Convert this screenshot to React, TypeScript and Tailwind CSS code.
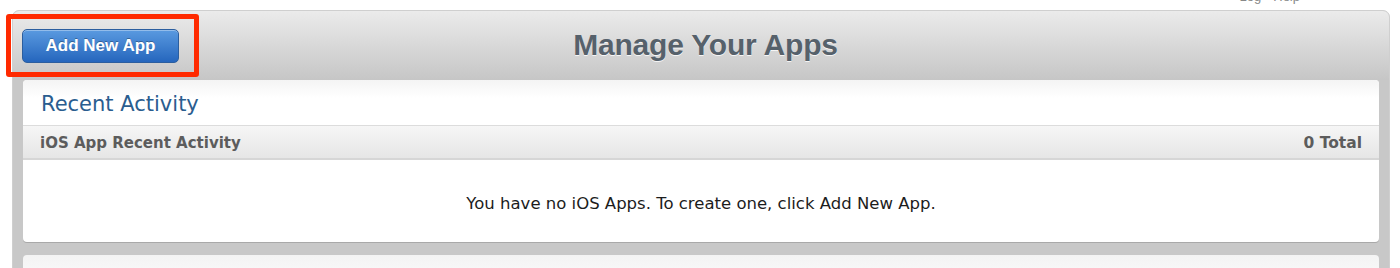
const sans = { fontFamily: '"DejaVu Sans", "Lucida Grande", sans-serif' };
const helv = { fontFamily: '"Liberation Sans", Helvetica, Arial, sans-serif' };

const App = () => {
  return (
    <div className="relative h-[268px] overflow-hidden bg-white">
      {/* top links, mostly scrolled out of view */}
      <div className="flex h-[10px] justify-end overflow-hidden pr-[100px]">
        <div className="mt-[-11px] flex gap-[12px] text-[13px] leading-[16px] text-[#888]" style={helv}>
          <span>Log</span>
          <span>Help</span>
        </div>
      </div>

      {/* main panel */}
      <div className="ml-[12px] mr-[10px] rounded-t-[7px] border border-[#cfcfcf] bg-[#c8c8c8]">
        {/* header */}
        <div className="grid h-[69px] grid-cols-[1fr_auto_1fr] items-center rounded-t-[6px] bg-gradient-to-b from-[#ebebeb] to-[#c6c6c6] pl-[9px]">
          <div>
            <button
              className="flex h-[34px] w-[157px] items-center justify-center rounded-[5px] border border-[#2b5e9f] bg-gradient-to-b from-[#5a9ae0] to-[#2566bd] text-[17px] font-bold text-white shadow-[inset_0_1px_0_rgba(255,255,255,0.35)] [text-shadow:0_-1px_0_rgba(0,0,0,0.3)]"
              style={helv}
            >
              Add New App
            </button>
          </div>
          <h1
            className="pb-[3px] text-[30px] font-bold tracking-[-0.2px] text-[#56616b] [text-shadow:0_1px_0_rgba(255,255,255,0.8)]"
            style={helv}
          >
            Manage Your Apps
          </h1>
          <div />
        </div>

        <div className="flex flex-col gap-[13px] px-[10px]">
          {/* recent activity card */}
          <div className="rounded-[4px] bg-white shadow-[0_1px_0_#a9a9a9]" style={sans}>
            <div className="flex h-[46px] items-center rounded-t-[4px] border-b border-[#dcdcdc] bg-gradient-to-b from-[#f4f4f4] to-white to-[40%] px-[18px] pt-[4px]">
              <h2 className="text-[21px] text-[#2a5d8f]">Recent Activity</h2>
            </div>
            <div className="flex h-[34px] items-center justify-between border-b-2 border-[#d6d6d6] bg-gradient-to-b from-[#f6f6f6] to-[#e6e6e6] px-[17px] pt-[3px] text-[15px] font-bold text-[#5c5c5c]">
              <span>iOS App Recent Activity</span>
              <span className="text-[15.5px]">0 Total</span>
            </div>
            <div className="flex h-[82px] items-center justify-center pt-[6px] text-[16.5px] text-[#1c1c1c]">
              You have no iOS Apps. To create one, click Add New App.
            </div>
          </div>

          {/* next card, cut off */}
          <div className="h-[40px] rounded-t-[4px] bg-gradient-to-b from-[#f3f3f3] to-white" />
        </div>
      </div>

      {/* annotation box */}
      <div className="pointer-events-none absolute left-[6px] top-[14px] h-[63px] w-[193px] rounded-[3px] border-[5px] border-[#ff2a00]" />
    </div>
  );
};

export default App;
